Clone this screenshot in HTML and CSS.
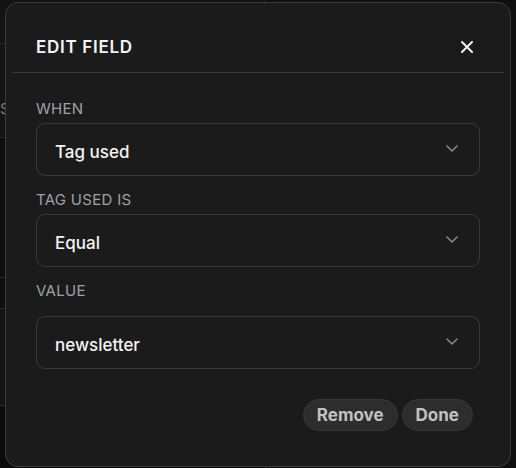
FILE: index.html
```html
<!DOCTYPE html>
<html>
<head>
<meta charset="utf-8">
<link rel="stylesheet" href="styles.css">
</head>
<body>
<div class="page">
  <div class="page-col">
    <div class="prow r1"></div>
    <div class="prow r2"><span class="ghost">ST</span></div>
    <div class="prow r3"></div>
    <div class="prow r4"></div>
    <div class="prow r5"></div>
    <div class="prow r6"></div>
  </div>
  <div class="page-col right"></div>
</div>

<div class="modal">
  <div class="modal-header">
    <h2 class="title">EDIT FIELD</h2>
    <button class="close" aria-label="Close">
      <svg width="12" height="12" viewBox="0 0 12 12"><path d="M1 1L11 11M11 1L1 11" stroke="#f2f2f2" stroke-width="2" stroke-linecap="round"/></svg>
    </button>
  </div>
  <div class="modal-body">
    <label class="label">WHEN</label>
    <div class="select">
      <span class="select-value">Tag used</span>
      <svg class="chev" width="12" height="7" viewBox="0 0 12 7"><path d="M1 1L6 6L11 1" fill="none" stroke="#8a8a90" stroke-width="1.5" stroke-linecap="round" stroke-linejoin="round"/></svg>
    </div>
    <label class="label gap-top">TAG USED IS</label>
    <div class="select">
      <span class="select-value">Equal</span>
      <svg class="chev" width="12" height="7" viewBox="0 0 12 7"><path d="M1 1L6 6L11 1" fill="none" stroke="#8a8a90" stroke-width="1.5" stroke-linecap="round" stroke-linejoin="round"/></svg>
    </div>
    <label class="label gap-top">VALUE</label>
    <div class="select value-select">
      <span class="select-value">newsletter</span>
      <svg class="chev" width="12" height="7" viewBox="0 0 12 7"><path d="M1 1L6 6L11 1" fill="none" stroke="#8a8a90" stroke-width="1.5" stroke-linecap="round" stroke-linejoin="round"/></svg>
    </div>
  </div>
  <div class="modal-footer">
    <button class="pill">Remove</button>
    <button class="pill">Done</button>
  </div>
</div>
</body>
</html>
```
FILE: styles.css
```css
* { box-sizing: border-box; }
html, body { margin: 0; padding: 0; }
body {
  width: 516px;
  height: 468px;
  background: #0e0e0e;
  font-family: Inter, "Noto Sans", "Liberation Sans", sans-serif;
  overflow: hidden;
  position: relative;
}
.page {
  display: flex;
  height: 468px;
}
.page-col {
  width: 266px;
  display: flex;
  flex-direction: column;
  border-right: 1px solid #262626;
}
.page-col.right { flex: 1; border-right: none; background: #0f0f0f; }
.prow { border-bottom: 1px solid #2a2a2a; }
.r1 { height: 44px; background: #141414; }
.r2 { height: 94px; background: #141414; overflow: hidden; }
.r3 { height: 140px; background: #0e0e0e; }
.r4 { height: 31px; background: #0e0e0e; }
.r5 { height: 97px; background: #141414; }
.r6 { flex: 1; background: #0b0b0b; border-bottom: none; }
.ghost {
  display: block;
  padding-top: 55px;
  padding-left: 0;
  font-size: 15px;
  color: #7d7d82;
}

.modal {
  position: absolute;
  left: 5px;
  top: 2px;
  width: 506px;
  height: 465px;
  background: #1b1b1b;
  border: 1px solid #3b3b3b;
  border-radius: 13px;
  display: flex;
  flex-direction: column;
}
.modal-header {
  height: 70px;
  margin: 0 6px;
  padding: 18px 31px 0 24px;
  border-bottom: 1px solid #3a3a3a;
  display: flex;
  align-items: center;
  justify-content: space-between;
}
.title {
  margin: 0;
  font-size: 17px;
  font-weight: 600;
  letter-spacing: 0.7px;
  color: #f4f4f4;
}
.close {
  background: none;
  border: none;
  padding: 0;
  width: 12px;
  height: 12px;
  display: flex;
  margin-top: 1px;
}
.modal-body {
  padding: 26px 30px 0 30px;
  display: flex;
  flex-direction: column;
}
.label {
  display: block;
  font-size: 15px;
  line-height: 20px;
  font-weight: 400;
  letter-spacing: 0.3px;
  color: #a0a0a6;
  margin-bottom: 4px;
}
.gap-top { margin-top: 14px; }
.select {
  height: 53px;
  border: 1px solid #393939;
  border-radius: 9px;
  display: flex;
  align-items: center;
  justify-content: space-between;
  padding: 0 21px 0 18px;
}
.value-select { margin-top: 11px; }
.select-value {
  font-size: 17px;
  font-weight: 500;
  color: #f4f4f4;
  padding-top: 5px;
}
.chev { margin-bottom: 2px; }
.modal-footer {
  display: flex;
  justify-content: flex-end;
  gap: 4px;
  padding: 30px 37px 0 0;
}
.pill {
  height: 32px;
  border-radius: 16px;
  background: #2d2d2d;
  border: 1px solid #363636;
  color: #c2c2c2;
  font-family: Inter, "Noto Sans", "Liberation Sans", sans-serif;
  font-size: 17px;
  font-weight: 700;
  padding: 0 13px;
}
```
